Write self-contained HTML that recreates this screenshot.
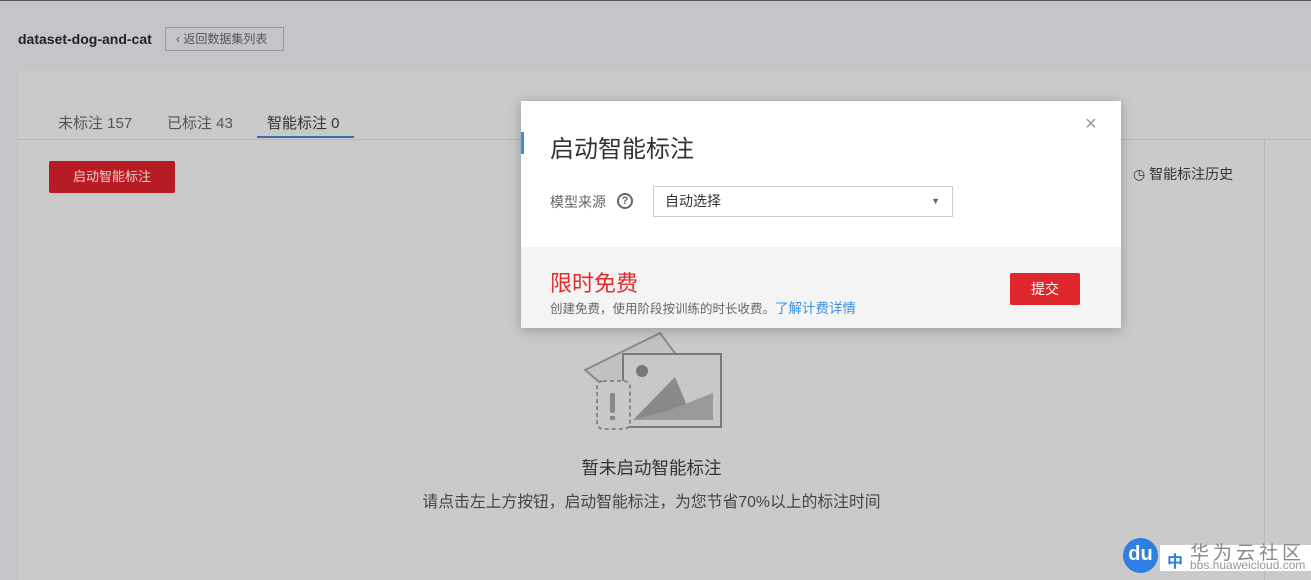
<!DOCTYPE html>
<html><head><meta charset="utf-8"><style>
*{margin:0;padding:0;box-sizing:border-box}
html,body{width:1311px;height:580px;overflow:hidden}
body{background:#c4c5c8;font-family:"Liberation Sans","Noto Sans CJK SC",sans-serif;position:relative;color:#333}
.abs{position:absolute;white-space:nowrap}
</style></head><body>
<div class="abs" style="left:0;top:0;width:1311px;height:1px;background:#555"></div>
<div class="abs" style="left:18px;top:31px;font-size:14px;font-weight:bold;color:#222">dataset-dog-and-cat</div>
<div class="abs" style="left:165px;top:27px;width:119px;height:24px;border:1px solid #999;font-size:12px;color:#555;line-height:22px;padding-left:10px">‹&nbsp;返回数据集列表</div>
<div class="abs" style="left:18px;top:71px;width:1293px;height:509px;background:#cacaca"></div>
<div class="abs" style="left:18px;top:139px;width:1293px;height:1px;background:#b8b8b8"></div>
<div class="abs" style="left:1264px;top:139px;width:1px;height:441px;background:#b8b8b8"></div>
<div class="abs" style="left:58px;top:112px;font-size:15px;color:#555">未标注 157</div>
<div class="abs" style="left:167px;top:112px;font-size:15px;color:#555">已标注 43</div>
<div class="abs" style="left:267px;top:112px;font-size:15px;color:#333">智能标注 0</div>
<div class="abs" style="left:257px;top:136px;width:97px;height:2px;background:#3a70a8"></div>
<div class="abs" style="left:49px;top:161px;width:126px;height:32px;background:#b71c24;color:#f0d0d0;font-size:13px;line-height:32px;text-align:center;border-radius:2px">启动智能标注</div>
<div class="abs" style="left:1133px;top:164px;font-size:14px;color:#333">◷ 智能标注历史</div>
<svg class="abs" style="left:575px;top:325px" width="160" height="115" viewBox="0 0 160 115">
<polygon points="10,45 85,8 105,35 40,70" fill="#c2c2c2" stroke="#8a8a8a" stroke-width="2"/>
<rect x="48" y="29" width="98" height="73" fill="#c8c8c8" stroke="#7a7a7a" stroke-width="2"/>
<circle cx="67" cy="46" r="6" fill="#777"/>
<polygon points="58,95 100,52 118,95" fill="#8a8a8a"/>
<polygon points="58,95 95,85 138,68 138,95" fill="#9a9a9a"/>
<rect x="22" y="56" width="33" height="48" rx="6" fill="#c8c8c8" stroke="#888" stroke-width="2" stroke-dasharray="4,3"/>
<rect x="35" y="68" width="5" height="20" rx="2" fill="#888"/><rect x="35" y="91" width="5" height="4" fill="#888"/>
</svg>
<div class="abs" style="left:0;top:455px;width:1303px;text-align:center;font-size:17.5px;color:#333">暂未启动智能标注</div>
<div class="abs" style="left:0;top:489px;width:1303px;text-align:center;font-size:15.8px;color:#444">请点击左上方按钮，启动智能标注，为您节省70%以上的标注时间</div>
<div class="abs" style="left:521px;top:101px;width:600px;height:227px;background:#fff;box-shadow:0 2px 12px rgba(0,0,0,.25)">
<div class="abs" style="left:0;top:31px;width:3px;height:22px;background:#3f8fe0"></div>
<div class="abs" style="left:29px;top:28px;font-size:24px;color:#333">启动智能标注</div>
<div class="abs" style="left:564px;top:12px;font-size:20px;color:#999">×</div>
<div class="abs" style="left:29px;top:91px;font-size:14px;color:#666">模型来源</div>
<div class="abs" style="left:96px;top:92px;width:16px;height:16px;border:2px solid #666;border-radius:50%;font-size:11px;font-weight:bold;color:#666;text-align:center;line-height:12px">?</div>
<div class="abs" style="left:132px;top:85px;width:300px;height:31px;border:1px solid #ccc;font-size:14px;line-height:29px;padding-left:11px;color:#333">自动选择<span style="position:absolute;right:12px;top:0;font-size:9px;color:#666">▼</span></div>
<div class="abs" style="left:0;top:146px;width:600px;height:81px;background:#f4f4f4">
<div class="abs" style="left:29px;top:19px;font-size:22px;color:#e52a2e">限时免费</div>
<div class="abs" style="left:29px;top:50px;font-size:12.5px;color:#666">创建免费，使用阶段按训练的时长收费。<span style="color:#3a8fe0;font-size:13.5px">了解计费详情</span></div>
<div class="abs" style="left:489px;top:26px;width:70px;height:32px;background:#e0262d;color:#fff;font-size:14px;line-height:32px;text-align:center;border-radius:2px">提交</div>
</div></div>
<div class="abs" style="left:1160px;top:545px;width:151px;height:26px;background:#fff"></div>
<div class="abs" style="left:1123px;top:538px;width:35px;height:35px;border-radius:50%;background:#2d7fe0;color:#fff;font-size:20px;font-weight:bold;text-align:center;line-height:33px">du</div>
<div class="abs" style="left:1167px;top:548px;font-size:16px;font-weight:bold;color:#2d7fe0">中</div>
<div class="abs" style="left:1190px;top:538px;font-size:19px;color:#888;letter-spacing:4px">华为云社区</div>
<div class="abs" style="left:1190px;top:558px;font-size:12px;color:#999">bbs.huaweicloud.com</div>
</body></html>
